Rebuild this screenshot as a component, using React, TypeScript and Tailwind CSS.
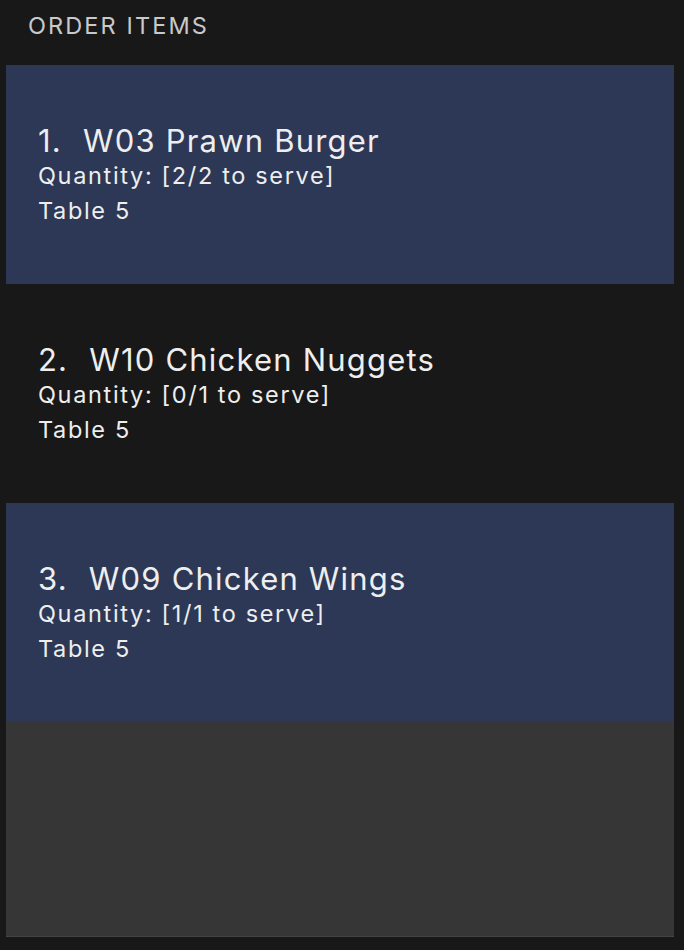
const items = [
  { no: 1, name: 'W03 Prawn Burger', served: 2, total: 2, table: 5, highlight: true },
  { no: 2, name: 'W10 Chicken Nuggets', served: 0, total: 1, table: 5, highlight: false },
  { no: 3, name: 'W09 Chicken Wings', served: 1, total: 1, table: 5, highlight: true },
]

export default function App() {
  return (
    <div className="w-[684px] h-[950px] bg-[#181818] flex flex-col font-['Inter',sans-serif]">
      {/* Header */}
      <div className="h-[65px] pl-[28px] pt-[8px] text-[23.5px] text-[#c9c9c9] tracking-[2.1px]">
        ORDER ITEMS
      </div>

      {/* List */}
      <div className="ml-[6px] mr-[10px] h-[872px] bg-[#363636] border-b border-[#444] flex flex-col">
        {items.map((it) => (
          <div
            key={it.no}
            className={
              'h-[219px] flex flex-col justify-center pl-[32px] pt-[2px] text-[#eeeeee] ' +
              (it.highlight ? 'bg-[#2c3856]' : 'bg-[#181818]')
            }
          >
            <div className="text-[31px] leading-[35px] tracking-[1.2px]">
              {it.no}.<span className="ml-[21px]">{it.name}</span>
            </div>
            <div className="text-[23.5px] leading-[35px] tracking-[1.65px]">
              Quantity: [{it.served}/{it.total} to serve]
            </div>
            <div className="text-[23.5px] leading-[35px] tracking-[1.65px]">Table {it.table}</div>
          </div>
        ))}
      </div>
    </div>
  )
}
